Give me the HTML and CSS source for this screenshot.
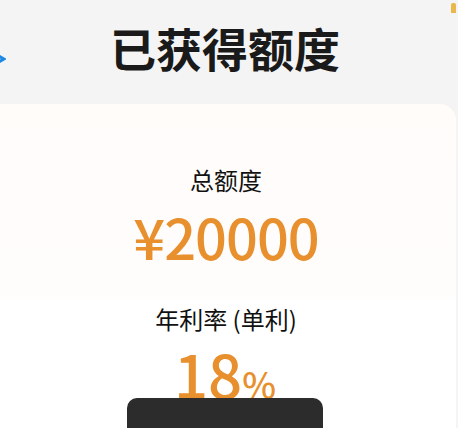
FILE: index.html
```html
<!DOCTYPE html>
<html lang="zh-CN">
<head>
    <meta charset="UTF-8">
    <meta name="viewport" content="width=device-width, initial-scale=1.0">
    <title>已获得额度</title>
    <link rel="stylesheet" href="styles.css">
</head>
<body>
    <div class="page">
        <!-- Bouton retour (coupé au bord) -->
        <svg class="back" width="6" height="10" viewBox="0 0 6 10">
            <path d="M-3 1 L4 5 L-3 9" fill="none" stroke="#1e88e5" stroke-width="3"/>
        </svg>
        <span class="mark"></span>

        <div class="header">
            <h1>已获得额度</h1>
        </div>

        <div class="card">
            <p class="label">总额度</p>
            <p class="amount">¥20000</p>
            <p class="label rate-label">年利率 (单利)</p>
            <p class="rate">18<span class="pct">%</span></p>
        </div>

        <div class="toast"></div>
    </div>
</body>
</html>
```

FILE: styles.css
```css
/* Base */
* {
    margin: 0;
    padding: 0;
    box-sizing: border-box;
}

body {
    font-family: "Noto Sans CJK SC", "Noto Sans", sans-serif;
    background-color: #f4f4f4;
    color: #111;
    overflow: hidden;
}

.page {
    position: relative;
    width: 458px;
    height: 428px;
}

.back {
    position: absolute;
    left: 0;
    top: 54px;
}

.mark {
    position: absolute;
    left: 451px;
    top: 3px;
    width: 5px;
    height: 10px;
    background: #e9b84a;
    border-radius: 2px 2px 0 0;
}

.header {
    height: 104px;
    display: flex;
    align-items: center;
    justify-content: center;
    padding: 0 8px 10px 0;
}

.header h1 {
    font-size: 46px;
    font-weight: 700;
    line-height: 1;
    color: #1a1a1a;
}

.card {
    width: 456px;
    height: 324px;
    background: linear-gradient(#fffcfa, #fffdfc 190px, #fff 200px);
    border-radius: 0 16px 0 0;
    text-align: center;
    padding: 62px 4px 0 0;
}

.label {
    font-size: 24px;
    line-height: 1.2;
    color: #111;
}

.amount {
    font-size: 56px;
    line-height: 1;
    font-weight: 500;
    color: #e88f2e;
    margin-top: 13px;
    letter-spacing: -1px;
}

.rate-label {
    margin-top: 41px;
}

.rate {
    font-size: 60px;
    line-height: 1;
    font-weight: 500;
    color: #e88f2e;
    margin-top: 9px;
    padding-right: 2px;
}

.rate .pct {
    font-size: 36px;
}

.toast {
    position: absolute;
    left: 127px;
    top: 398px;
    width: 196px;
    height: 40px;
    background: #2c2c2c;
    border-radius: 10px;
}
```
